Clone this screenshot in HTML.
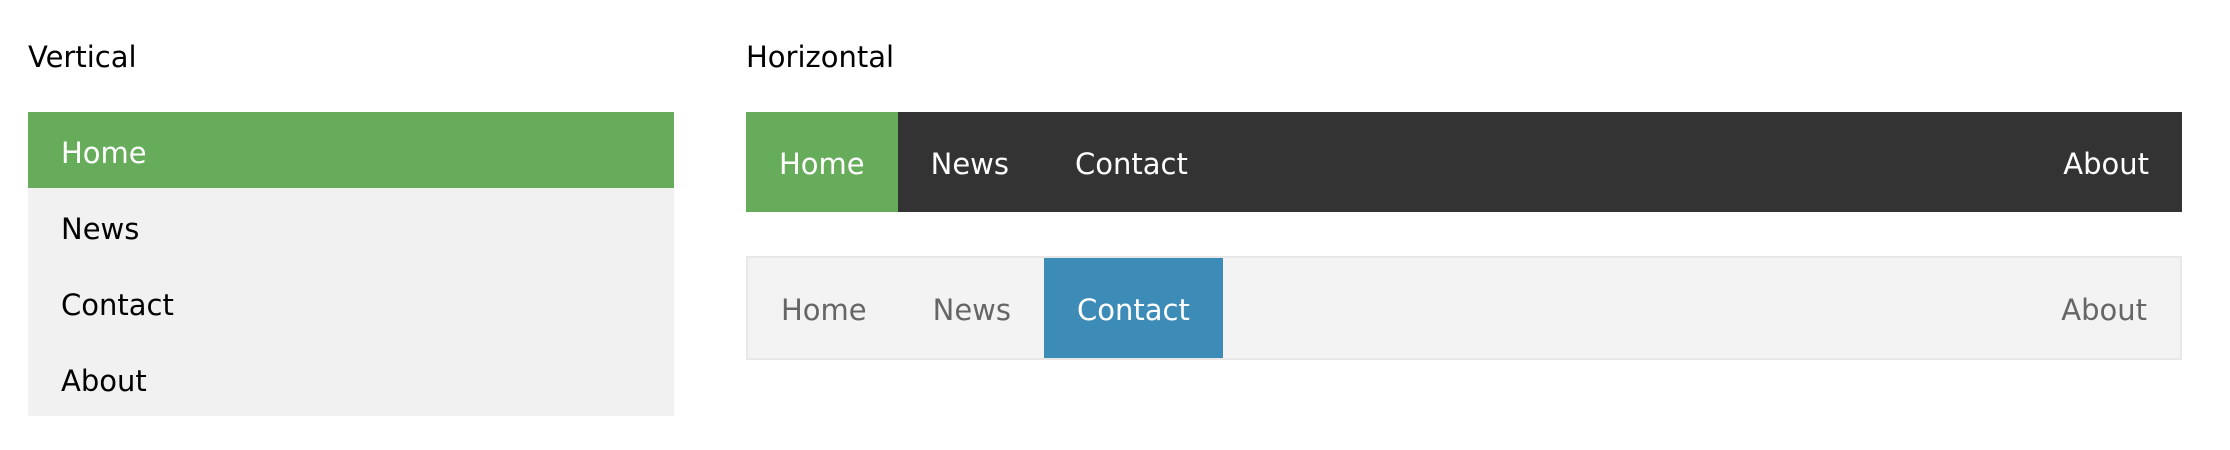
<!DOCTYPE html>
<html><head><meta charset="utf-8"><style>
html,body{margin:0;padding:0;background:#fff;width:2230px;height:450px;overflow:hidden;font-family:"DejaVu Sans","Liberation Sans",sans-serif;font-size:29px;}
.t{position:absolute;top:39px;line-height:36px;color:#000;}
.v{position:absolute;left:28px;top:112px;width:646px;background:#f1f1f1;}
.v div{height:74px;line-height:78px;padding-top:2px;padding-left:33px;color:#000;}
.v .a{background:#67ac5b;color:#fff;}
.h1{position:absolute;left:746px;top:112px;width:1436px;height:100px;background:#333;display:flex;}
.h1 div,.h2 div{padding:2px 33px 0;line-height:100px;height:98px;color:#fff;}
.h1 .a{background:#67ac5b;}
.h2{position:absolute;left:746px;top:256px;width:1432px;height:100px;background:#f3f3f3;border:2px solid #e7e7e7;display:flex;}
.h2 div{color:#666;}
.h2 .a{background:#3d8bb7;color:#fff;}
.r{margin-left:auto;}
</style></head><body>
<div class="t" style="left:28px">Vertical</div>
<div class="t" style="left:746px">Horizontal</div>
<div class="v"><div class="a">Home</div><div>News</div><div>Contact</div><div>About</div></div>
<div class="h1"><div class="a">Home</div><div>News</div><div>Contact</div><div class="r">About</div></div>
<div class="h2"><div>Home</div><div>News</div><div class="a">Contact</div><div class="r">About</div></div>
</body></html>
